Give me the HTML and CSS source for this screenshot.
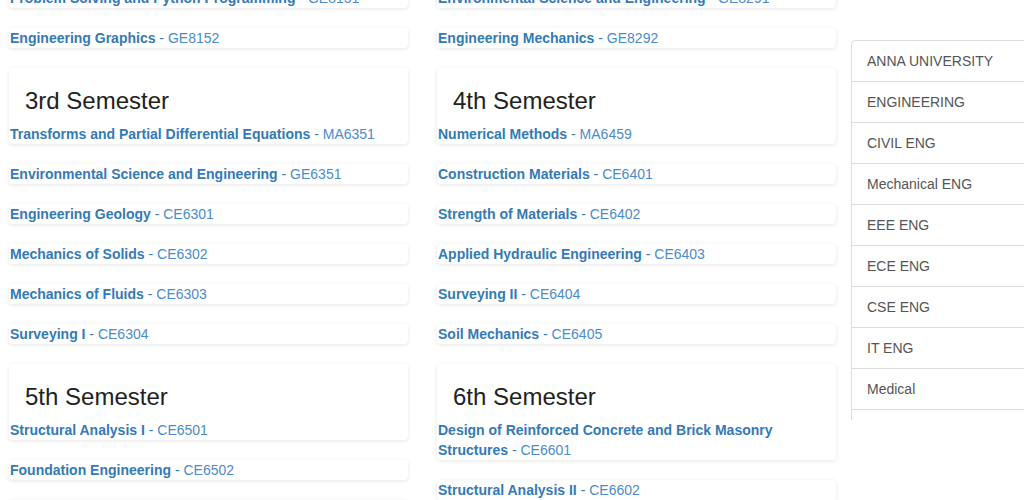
FILE: index.html
```html
<!DOCTYPE html>
<html lang="en">
<head>
    <meta charset="UTF-8">
    <meta name="viewport" content="width=device-width, initial-scale=1.0">
    <title>Civil Engineering Syllabus</title>
    <link rel="stylesheet" href="styles.css">
</head>
<body>
    <div class="page">
        <div class="subjects">
            <div class="column">
                <div class="card"><a href="#"><b>Problem Solving and Python Programming</b> - <span class="code">GE8151</span></a></div>
                <div class="card"><a href="#"><b>Engineering Graphics</b> - <span class="code">GE8152</span></a></div>

                <div class="card semester">
                    <h3>3rd Semester</h3>
                    <a href="#"><b>Transforms and Partial Differential Equations</b> - <span class="code">MA6351</span></a>
                </div>
                <div class="card"><a href="#"><b>Environmental Science and Engineering</b> - <span class="code">GE6351</span></a></div>
                <div class="card"><a href="#"><b>Engineering Geology</b> - <span class="code">CE6301</span></a></div>
                <div class="card"><a href="#"><b>Mechanics of Solids</b> - <span class="code">CE6302</span></a></div>
                <div class="card"><a href="#"><b>Mechanics of Fluids</b> - <span class="code">CE6303</span></a></div>
                <div class="card"><a href="#"><b>Surveying I</b> - <span class="code">CE6304</span></a></div>

                <div class="card semester">
                    <h3>5th Semester</h3>
                    <a href="#"><b>Structural Analysis I</b> - <span class="code">CE6501</span></a>
                </div>
                <div class="card"><a href="#"><b>Foundation Engineering</b> - <span class="code">CE6502</span></a></div>
                <div class="card"><a href="#"><b>Railways, Airports and Harbour Engineering</b> - <span class="code">CE6503</span></a></div>
            </div>

            <div class="column">
                <div class="card"><a href="#"><b>Environmental Science and Engineering</b> - <span class="code">GE8291</span></a></div>
                <div class="card"><a href="#"><b>Engineering Mechanics</b> - <span class="code">GE8292</span></a></div>

                <div class="card semester">
                    <h3>4th Semester</h3>
                    <a href="#"><b>Numerical Methods</b> - <span class="code">MA6459</span></a>
                </div>
                <div class="card"><a href="#"><b>Construction Materials</b> - <span class="code">CE6401</span></a></div>
                <div class="card"><a href="#"><b>Strength of Materials</b> - <span class="code">CE6402</span></a></div>
                <div class="card"><a href="#"><b>Applied Hydraulic Engineering</b> - <span class="code">CE6403</span></a></div>
                <div class="card"><a href="#"><b>Surveying II</b> - <span class="code">CE6404</span></a></div>
                <div class="card"><a href="#"><b>Soil Mechanics</b> - <span class="code">CE6405</span></a></div>

                <div class="card semester">
                    <h3>6th Semester</h3>
                    <a href="#"><b>Design of Reinforced Concrete and Brick Masonry Structures</b> - <span class="code">CE6601</span></a>
                </div>
                <div class="card"><a href="#"><b>Structural Analysis II</b> - <span class="code">CE6602</span></a></div>
            </div>
        </div>

        <div class="sidebar">
            <div class="list-group">
                <a href="#" class="list-item">ANNA UNIVERSITY</a>
                <a href="#" class="list-item">ENGINEERING</a>
                <a href="#" class="list-item">CIVIL ENG</a>
                <a href="#" class="list-item">Mechanical ENG</a>
                <a href="#" class="list-item">EEE ENG</a>
                <a href="#" class="list-item">ECE ENG</a>
                <a href="#" class="list-item">CSE ENG</a>
                <a href="#" class="list-item">IT ENG</a>
                <a href="#" class="list-item">Medical</a>
                <a href="#" class="list-item">Arts &amp; Science</a>
            </div>
        </div>
    </div>
</body>
</html>
```

FILE: styles.css
```css
html, body {
    height: 500px;
    overflow: hidden;
}

body {
    font-family: "Liberation Sans", Arial, Helvetica, sans-serif;
    font-size: 14px;
    line-height: 20px;
    color: #333;
    background: #fff;
    margin: 0;
}

a {
    text-decoration: none;
}

/* page is shown scrolled a little down */
.page {
    display: flex;
    align-items: flex-start;
    margin-top: -12px;
    padding-left: 9px;
}

.subjects {
    display: grid;
    grid-template-columns: 399px 399px;
    column-gap: 29px;
}

.card {
    background: #fff;
    border-radius: 4px;
    box-shadow: 0 1px 4px rgba(0,0,0,0.10);
    padding: 0 1px;
    margin-bottom: 20px;
}

.card a {
    display: block;
    color: #337ab7;
}

.card a b {
    font-weight: bold;
    color: #337ab7;
}

.card .code {
    color: #4a8bcd;
}

.semester {
    padding-top: 20px;
}

.semester h3 {
    margin: 0 0 10px;
    padding-left: 15px;
    font-size: 24px;
    font-weight: 500;
    line-height: 26px;
    color: #222;
}

.sidebar {
    margin-left: 15px;
    margin-top: 52px;
    width: 200px;
    height: 380px;
    overflow: hidden;
    flex-shrink: 0;
}

.list-group {
    border-top-left-radius: 4px;
}

.list-item {
    display: block;
    padding: 10px 15px;
    margin-bottom: -1px;
    border: 1px solid #ddd;
    color: #555;
    background: #fff;
}

.list-item:first-child {
    border-top-left-radius: 4px;
    border-top-right-radius: 4px;
}
```
